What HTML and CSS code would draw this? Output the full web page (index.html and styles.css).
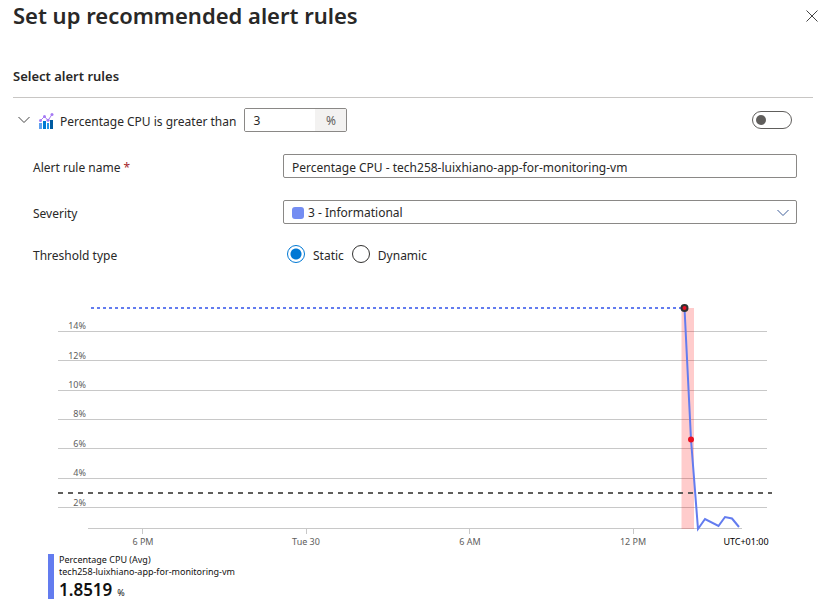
FILE: index.html
```html
<!DOCTYPE html>
<html lang="en">
<head>
<meta charset="utf-8">
<title>Set up recommended alert rules</title>
<link rel="stylesheet" href="styles.css">
</head>
<body>
<main class="panel">
  <header class="panel-header">
    <h1>Set up recommended alert rules</h1>
    <button class="close" type="button" aria-label="Close">
      <svg width="12" height="12" viewBox="0 0 12 12"><path d="M.5 .5l11 11M11.500 .5l-11 11"/></svg>
    </button>
  </header>
  <h2>Select alert rules</h2>
  <section class="rule">
    <div class="rule-head">
      <button class="expand" type="button" aria-label="Collapse rule">
        <svg width="12" height="8" viewBox="0 0 12 8"><path d="M.5 1l5.500 5.500L11.500 1"/></svg>
      </button>
      <svg class="metric-icon" width="15" height="16" viewBox="0 0 15 16">
        <path fill="#5ea0ef" d="M0 10h3v6H0z"/>
        <path fill="#0078d4" d="M4 8h3v8H4z"/>
        <path fill="#2795e8" d="M8 10h2v6H8z"/>
        <path fill="#005ba1" d="M11 7h3v9h-3z"/>
        <path fill="none" stroke="#a67af4" d="M1.500 7.500l4-4 3.500 4 4-6"/>
        <circle cx="1.500" cy="7.500" r="1.500" fill="#a67af4"/>
        <circle cx="5.500" cy="3.500" r="1.500" fill="#a67af4"/>
        <circle cx="9" cy="7.300" r="1.500" fill="#a67af4"/>
        <circle cx="13" cy="1.500" r="1.500" fill="#a67af4"/>
      </svg>
      <label for="threshold">Percentage CPU is greater than</label>
      <span class="unit-box">
        <input id="threshold" type="text" value="3">
        <span class="unit">%</span>
      </span>
      <input class="toggle" type="checkbox" role="switch" aria-label="Enable rule">
    </div>
    <div class="fields">
      <label class="caption" for="name">Alert rule name <span class="required">*</span></label>
      <input class="field" id="name" type="text" value="Percentage CPU - tech258-luixhiano-app-for-monitoring-vm">
      <label class="caption" for="severity">Severity</label>
      <div class="select-box">
        <select class="field" id="severity"><option>3 - Informational</option></select>
        <span class="swatch"></span>
        <svg class="chevron" width="12" height="8" viewBox="0 0 12 8"><path d="M.5 1l5.500 5.500L11.500 1"/></svg>
      </div>
      <span class="caption" id="type-label">Threshold type</span>
      <div class="radios" role="radiogroup" aria-labelledby="type-label">
        <label><input type="radio" name="type" checked><span>Static</span></label>
        <label><input type="radio" name="type"><span>Dynamic</span></label>
      </div>
    </div>
    <figure class="chart">
      <svg viewBox="33 300 764 252" role="img" aria-label="Percentage CPU over time">
        <path class="grid" d="M58 331.500H767M58 360.500H767M58 390.500H767M58 419.500H767M58 448.500H767M58 478.500H767M58 507.500H767M88 528.500H742M142.500 528V534M306.500 528V534M469.500 528V534M633.500 528V534"/>
        <g class="y-axis">
          <text x="86" y="329">14%</text>
          <text x="86" y="359">12%</text>
          <text x="86" y="388">10%</text>
          <text x="86" y="417">8%</text>
          <text x="86" y="447">6%</text>
          <text x="86" y="476">4%</text>
          <text x="86" y="506">2%</text>
        </g>
        <g class="x-axis">
          <text x="143" y="545">6 PM</text>
          <text x="306" y="545">Tue 30</text>
          <text x="470" y="545">6 AM</text>
          <text x="633" y="545">12 PM</text>
          <text class="zone" x="746" y="545">UTC+01:00</text>
        </g>
        <path class="projected" d="M91 308H684"/>
        <rect class="band" x="681.500" y="308" width="12.500" height="221"/>
        <path class="limit" d="M58 493H772"/>
        <path class="series" d="M684.500 308L691 439.500 698 529 705 519 718.500 526 725 517 732 518.500 739 527"/>
        <circle class="start" cx="684.500" cy="308" r="3"/>
        <circle class="alert" cx="691" cy="439.500" r="3"/>
      </svg>
      <figcaption class="legend">
        <span>Percentage CPU (Avg)</span>
        <span>tech258-luixhiano-app-for-monitoring-vm</span>
        <span class="value"><strong>1.8519</strong><span>%</span></span>
      </figcaption>
    </figure>
  </section>
</main>
</body>
</html>
```
FILE: styles.css
```css
* {
  box-sizing: border-box;
}

body {
  margin: 0;
  background: #fff;
  color: #292827;
  font: 12px/18px "Noto Sans", "Open Sans", sans-serif;
}

button,
input,
select {
  margin: 0;
  font: inherit;
  color: inherit;
}

button {
  display: flex;
  padding: 0;
  border: 0;
  background: none;
}

svg {
  display: block;
}

.panel {
  padding: 0 16px 8px 13px;
}

.panel-header {
  display: flex;
  justify-content: space-between;
  align-items: flex-start;
  height: 32px;
}

h1 {
  margin: 0;
  font-size: 22px;
  line-height: 30px;
  font-weight: 600;
}

.close {
  margin: 10px -5px 0 0;
}

.close path,
.expand path {
  fill: none;
  stroke: #444;
}

h2 {
  margin: 0;
  padding: 35px 0 12px;
  border-bottom: 1px solid #c8c6c4;
  font-size: 13px;
  line-height: 18px;
  font-weight: 600;
}

.rule-head {
  display: flex;
  align-items: center;
  height: 24px;
  margin: 10px 21px 0 5px;
}

.rule-head label,
.caption {
  padding-top: 4px;
}

.metric-icon {
  margin: 2px 6px 0 9px;
}

.unit-box {
  display: flex;
  width: 103px;
  height: 24px;
  margin-left: 8px;
  border: 1px solid #8a8886;
  border-radius: 2px;
  overflow: hidden;
}

.unit-box input {
  flex: 1;
  min-width: 0;
  padding: 2px 8px 0;
  border: 0;
}

.unit {
  width: 31px;
  background: #f3f2f1;
  color: #605e5c;
  line-height: 24px;
  text-align: center;
}

.toggle {
  appearance: none;
  display: flex;
  align-items: center;
  width: 40px;
  height: 18px;
  margin-left: auto;
  padding: 0 3px;
  border: 1px solid #605e5c;
  border-radius: 9px;
}

.toggle::before {
  content: "";
  width: 10px;
  height: 10px;
  border-radius: 50%;
  background: #605e5c;
}

.fields {
  display: grid;
  grid-template-columns: 250px 1fr;
  grid-template-rows: 46px 46px 38px;
  align-items: center;
  margin: 11px 16px 0 20px;
}

.required {
  color: #a4262c;
}

.field {
  display: block;
  width: 100%;
  height: 24px;
  padding: 2px 8px 0;
  border: 1px solid #8a8886;
  border-radius: 2px;
  background: #fff;
}

.select-box {
  position: relative;
}

.select-box .field {
  appearance: none;
  padding-left: 24px;
}

.swatch {
  position: absolute;
  left: 9px;
  top: 7px;
  width: 12px;
  height: 12px;
  border-radius: 3px;
  background: #748df2;
}

.chevron {
  position: absolute;
  right: 8px;
  top: 9px;
}

.chevron path {
  fill: none;
  stroke: #3f5f9a;
}

.radios {
  display: flex;
  gap: 8px;
  margin-left: 4px;
}

.radios label {
  display: flex;
  align-items: center;
  gap: 8px;
}

.radios span {
  padding-top: 4px;
}

.radios input {
  appearance: none;
  width: 18px;
  height: 18px;
  border: 1px solid #323130;
  border-radius: 50%;
}

.radios input:checked {
  border-color: #0078d4;
  background: radial-gradient(circle, #0078d4 5px, transparent 6px);
}

.chart {
  margin: 27px 16px 0 20px;
}

.chart svg {
  width: 100%;
}

.chart text {
  font-size: 9px;
  fill: #605e5c;
}

.grid {
  fill: none;
  stroke: #c8c8c8;
}

.y-axis {
  text-anchor: end;
}

.x-axis {
  text-anchor: middle;
}

.chart .zone {
  fill: #000;
}

.projected {
  stroke: #637cef;
  stroke-width: 2;
  stroke-dasharray: 3 3;
}

.series {
  fill: none;
  stroke: #637cef;
  stroke-width: 2;
}

.band {
  fill: #f00;
  fill-opacity: 0.2;
}

.limit {
  stroke: #605e5c;
  stroke-width: 2;
  stroke-dasharray: 5 5;
}

.start {
  fill: #e81123;
  stroke: #323130;
  stroke-width: 2;
}

.alert {
  fill: #e81123;
}

.legend {
  display: flex;
  flex-direction: column;
  height: 45px;
  margin: 2px 0 0 15px;
  padding-left: 5px;
  border-left: 6px solid #637cef;
  color: #111;
  font-size: 9px;
  line-height: 12px;
}

.value {
  display: flex;
  align-items: baseline;
  gap: 5px;
}

.value strong {
  font-size: 17px;
  line-height: 24px;
  font-weight: 600;
}
```
